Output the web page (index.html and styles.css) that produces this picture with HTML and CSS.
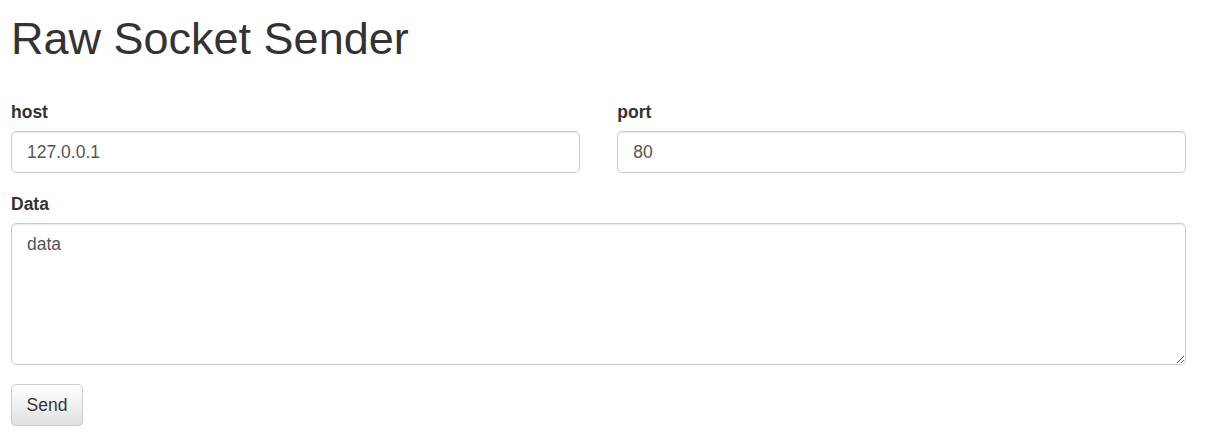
FILE: index.html
```html
<!DOCTYPE html>
<html lang="en">
<head>
<meta charset="utf-8">
<title>Raw Socket Sender</title>
<link rel="stylesheet" href="styles.css">
</head>
<body>
<div class="page">
  <h1 class="title">Raw Socket Sender</h1>
  <form class="form">
    <div class="row">
      <div class="group">
        <label class="label" for="host">host</label>
        <input class="control" id="host" type="text" value="127.0.0.1">
      </div>
      <div class="group">
        <label class="label" for="port">port</label>
        <input class="control" id="port" type="text" value="80">
      </div>
    </div>
    <div class="group">
      <label class="label" for="data">Data</label>
      <textarea class="control area" id="data" rows="5">data</textarea>
    </div>
    <button class="btn" type="button">Send</button>
  </form>
</div>
</body>
</html>
```

FILE: styles.css
```css
* { box-sizing: border-box; }
html, body { margin: 0; padding: 0; background: #fff; }
body {
  font-family: "Liberation Sans", Arial, Helvetica, sans-serif;
  font-size: 17.5px;
  line-height: 25px;
  color: #333;
}
.page {
  padding: 0 19px 0 11px;
}
.title {
  font-family: "Liberation Sans", Arial, Helvetica, sans-serif;
  font-weight: 500;
  font-size: 45px;
  line-height: 49.5px;
  margin: 14px 0 0 0;
  color: #333;
}
.form {
  margin-top: 36px;
}
.row {
  display: grid;
  grid-template-columns: 1fr 1fr;
  column-gap: 37.5px;
}
.group {
  margin-bottom: 18.75px;
}
.label {
  display: block;
  font-weight: 700;
  margin-bottom: 6.25px;
  max-width: 100%;
}
.control {
  display: block;
  width: 100%;
  height: 42.5px;
  padding: 7.5px 15px;
  font-family: inherit;
  font-size: 17.5px;
  line-height: 25px;
  color: #555;
  background: #fff;
  border: 1px solid #ccc;
  border-radius: 5px;
  box-shadow: inset 0 1.25px 1.25px rgba(0,0,0,.075);
  margin: 0;
}
.area {
  height: auto;
  resize: vertical;
}
.btn {
  display: inline-block;
  font-family: inherit;
  font-size: 17.5px;
  line-height: 25px;
  padding: 7.5px 14.5px;
  color: #333;
  border: 1px solid #ccc;
  border-radius: 5px;
  background-color: #e0e0e0;
  background-image: linear-gradient(to bottom, #fff 0, #e0e0e0 100%);
  text-shadow: 0 1px 0 #fff;
  box-shadow: inset 0 1px 0 rgba(255,255,255,.15), 0 1px 1px rgba(0,0,0,.075);
  cursor: pointer;
  margin: 0;
}
```
